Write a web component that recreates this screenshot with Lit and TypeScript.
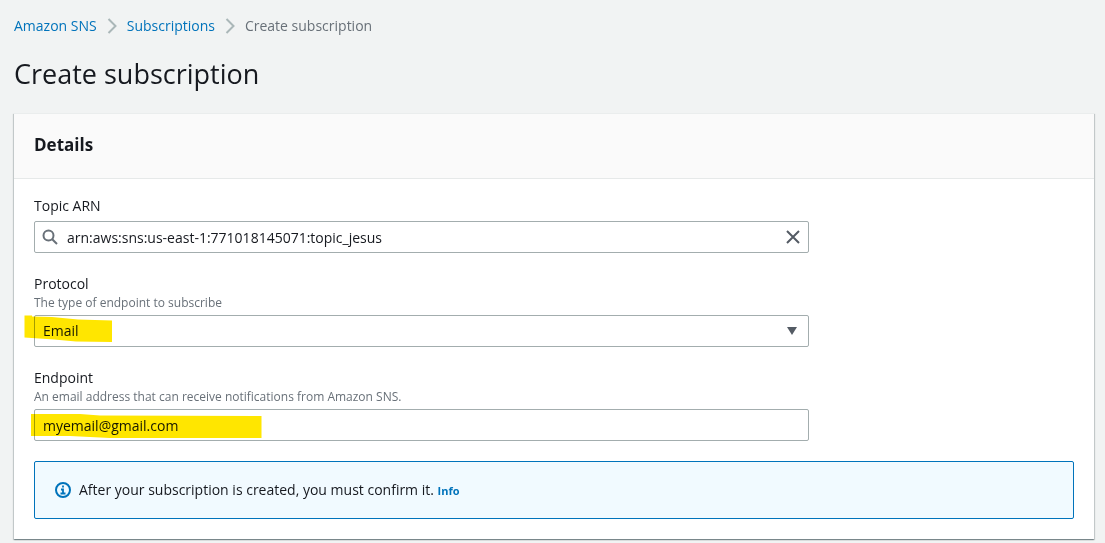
import { LitElement, html, css } from "lit";
import { customElement, state } from "lit/decorators.js";

const chevron = html`<svg class="chevron" viewBox="0 0 10 16" aria-hidden="true">
  <path d="M1.5 1 L8.5 8 L1.5 15" />
</svg>`;

@customElement("app-root")
export class AppRoot extends LitElement {
  @state() private topic = "arn:aws:sns:us-east-1:771018145071:topic_jesus";
  @state() private endpoint = "myemail@gmail.com";

  static styles = css`
    :host {
      display: block;
      box-sizing: border-box;
      min-height: 100vh;
      padding: 15px 11px 3px 14px;
      background: #f1f3f3;
      color: #16191f;
      font-family: "Open Sans", "Noto Sans", sans-serif;
      font-size: 14px;
      line-height: 22px;
    }
    * {
      box-sizing: border-box;
    }
    a {
      color: #0073bb;
      text-decoration: none;
    }
    .crumbs {
      display: flex;
      align-items: center;
      gap: 10px;
      margin: 0;
      padding: 0;
      list-style: none;
      color: #687078;
    }
    .crumbs li {
      display: flex;
      align-items: center;
      gap: 10px;
    }
    .chevron {
      width: 10px;
      height: 16px;
      fill: none;
      stroke: #aab7b8;
      stroke-width: 2;
    }
    h1 {
      margin: 19px 0 21px;
      font-size: 27px;
      line-height: 36px;
      font-weight: 400;
    }
    .card {
      background: #fff;
      box-shadow: 0 1px 1px rgba(0, 28, 36, 0.3), 1px 1px 1px rgba(0, 28, 36, 0.15),
        -1px 1px 1px rgba(0, 28, 36, 0.15);
    }
    .card-head {
      padding: 20px 20px 22px;
      border-top: 1px solid #eaeded;
      border-bottom: 1px solid #e6e9e9;
      background: #fafafa;
    }
    h2 {
      margin: 0;
      font-size: 17px;
      line-height: 22px;
      font-weight: 700;
    }
    .card-body {
      display: flex;
      flex-direction: column;
      gap: 20px;
      padding: 16px 20px 20px;
    }
    .field {
      display: flex;
      flex-direction: column;
      width: calc(75% - 5px);
    }
    .hint {
      font-size: 12px;
      line-height: 16px;
      color: #687078;
    }
    .control {
      display: grid;
      align-items: center;
      position: relative;
      margin-top: 4px;
    }
    .control > input,
    .control > select {
      grid-area: 1 / 1;
      width: 100%;
      height: 32px;
      margin: 0;
      padding: 0 8px;
      border: 1px solid #a3adae;
      border-radius: 2px;
      outline: none;
      background: #fff;
      color: #16191f;
      font: inherit;
      appearance: none;
    }
    .control > .search {
      padding: 0 32px;
    }
    .icon {
      grid-area: 1 / 1;
      width: 16px;
      height: 16px;
      fill: none;
      stroke: #687078;
      stroke-width: 2;
      pointer-events: none;
    }
    .lens {
      margin-left: 8px;
    }
    .caret {
      justify-self: end;
      margin-right: 9px;
      fill: #545b64;
      stroke: none;
    }
    .clear {
      grid-area: 1 / 1;
      justify-self: end;
      display: flex;
      margin-right: 8px;
      padding: 0;
      border: 0;
      background: none;
      cursor: pointer;
    }
    .clear .icon {
      stroke: #545b64;
    }
    .marker {
      position: absolute;
      fill: #ffe600;
      mix-blend-mode: multiply;
      pointer-events: none;
    }
    .marker-protocol {
      left: -10px;
      top: 0;
      width: 88px;
      height: 28px;
    }
    .marker-endpoint {
      left: -4px;
      top: 4px;
      width: 232px;
      height: 26px;
    }
    .alert {
      display: flex;
      align-items: center;
      gap: 8px;
      padding: 17px 20px;
      border: 1px solid #0073bb;
      border-radius: 2px;
      background: #f1faff;
    }
    .alert p {
      margin: 0;
    }
    .alert .icon {
      flex: none;
      stroke: #0073bb;
    }
    .info {
      font-size: 11px;
      line-height: 16px;
      font-weight: 700;
    }
  `;

  render() {
    return html`
      <nav aria-label="Breadcrumbs">
        <ol class="crumbs">
          <li><a href="#sns">Amazon SNS</a>${chevron}</li>
          <li><a href="#subscriptions">Subscriptions</a>${chevron}</li>
          <li aria-current="page">Create subscription</li>
        </ol>
      </nav>
      <h1>Create subscription</h1>
      <section class="card">
        <header class="card-head"><h2>Details</h2></header>
        <div class="card-body">
          <div class="field">
            <label for="topic">Topic ARN</label>
            <div class="control">
              <input
                id="topic"
                class="search"
                type="text"
                .value=${this.topic}
                @input=${(e: Event) => (this.topic = (e.target as HTMLInputElement).value)}
              />
              <svg class="icon lens" viewBox="0 0 16 16" aria-hidden="true">
                <circle cx="6.5" cy="6.5" r="5" />
                <path d="M10.2 10.2 L15 15" />
              </svg>
              <button class="clear" type="button" aria-label="Clear" @click=${() => (this.topic = "")}>
                <svg class="icon" viewBox="0 0 16 16" aria-hidden="true">
                  <path d="M2 2 L14 14 M14 2 L2 14" />
                </svg>
              </button>
            </div>
          </div>
          <div class="field">
            <label for="protocol">Protocol</label>
            <span class="hint" id="protocol-hint">The type of endpoint to subscribe</span>
            <div class="control">
              <select id="protocol" aria-describedby="protocol-hint">
                <option>Email</option>
              </select>
              <svg class="icon caret" viewBox="0 0 16 16" aria-hidden="true">
                <path d="M3 4 H13 L8 12 Z" />
              </svg>
              <svg class="marker marker-protocol" viewBox="0 0 88 28" aria-hidden="true">
                <path d="M0.5 0.5 L8 0.5 L8 1.5 L28 2 L54 4.5 L88 5.5 L88 27 L52 26.5 L30 24.5 L0.5 22.5 Z" />
              </svg>
            </div>
          </div>
          <div class="field">
            <label for="endpoint">Endpoint</label>
            <span class="hint" id="endpoint-hint"
              >An email address that can receive notifications from Amazon SNS.</span
            >
            <div class="control">
              <input
                id="endpoint"
                type="email"
                aria-describedby="endpoint-hint"
                .value=${this.endpoint}
                @input=${(e: Event) => (this.endpoint = (e.target as HTMLInputElement).value)}
              />
              <svg class="marker marker-endpoint" viewBox="0 0 232 26" aria-hidden="true">
                <path d="M1 1 L50 1 L70 2.5 L231.5 3 L231.5 25 L80 25 L40 23 L1 23 Z" />
              </svg>
            </div>
          </div>
          <div class="alert">
            <svg class="icon" viewBox="0 0 16 16" aria-hidden="true">
              <circle cx="8" cy="8" r="7" />
              <path d="M8 3.5 V5.5 M6 7.5 H8 V11.5 M5.5 11.5 H10.5" stroke-width="1.8" />
            </svg>
            <p>
              After your subscription is created, you must confirm it.
              <a class="info" href="#info">Info</a>
            </p>
          </div>
        </div>
      </section>
    `;
  }
}
